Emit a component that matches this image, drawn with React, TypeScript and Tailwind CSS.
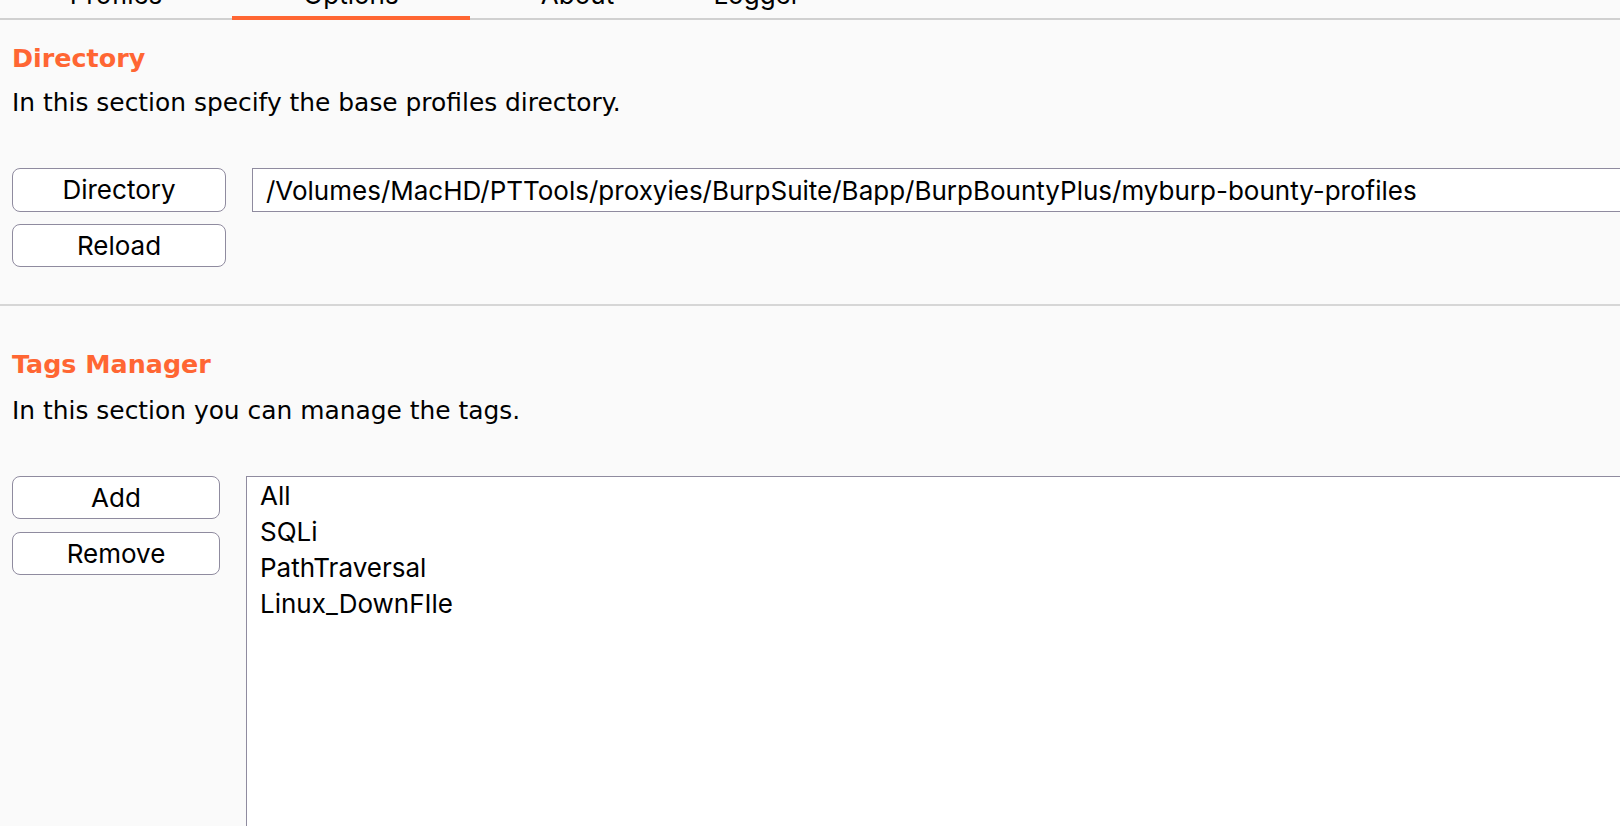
import { useState } from 'react';

type Tab = {
  label: string;
  width: string;
};

const tabs: Tab[] = [
  { label: 'Profiles', width: 'w-[232px]' },
  { label: 'Options', width: 'w-[238px]' },
  { label: 'About', width: 'w-[215px]' },
  { label: 'Logger', width: 'w-[144px]' },
];

const tags = ['All', 'SQLi', 'PathTraversal', 'Linux_DownFIle'];

const uiFont = "font-['Inter','Liberation_Sans',sans-serif]";
const textFont = "font-['DejaVu_Sans','Liberation_Sans',sans-serif]";

function AquaButton({ label, width }: { label: string; width: string }) {
  return (
    <button
      className={`${width} h-[43px] rounded-[8px] border border-[#8f8b9f] bg-white text-[26px] leading-none text-black ${uiFont}`}
    >
      {label}
    </button>
  );
}

function SectionTitle({ title, description, gap }: { title: string; description: string; gap: string }) {
  return (
    <div className={textFont}>
      <h2 className="text-[25.4px] font-bold leading-[30px] text-[#ff6633]">{title}</h2>
      <p className={`${gap} text-[24.9px] leading-[30px] text-black`}>{description}</p>
    </div>
  );
}

export default function App() {
  const [activeTab] = useState('Options');
  const [directory] = useState('/Volumes/MacHD/PTTools/proxyies/BurpSuite/Bapp/BurpBountyPlus/myburp-bounty-profiles');

  return (
    <div className="h-[826px] w-full overflow-hidden bg-[#fafafa]">
      {/* tab strip, scrolled so only the bottom of the labels shows */}
      <div className={`flex h-[20px] border-b-2 border-[#d0d0d0] ${uiFont}`}>
        {tabs.map((tab) => (
          <div
            key={tab.label}
            className={`${tab.width} -mb-[2px] h-[20px] shrink-0 overflow-hidden ${
              activeTab === tab.label ? 'border-b-4 border-[#ff6633]' : ''
            }`}
          >
            <div className="-mt-[18.4px] text-center text-[26px] leading-none text-black">{tab.label}</div>
          </div>
        ))}
      </div>

      {/* Directory */}
      <section className="px-[12px] pt-[23px]">
        <SectionTitle
          title="Directory"
          description="In this section specify the base profiles directory."
          gap="mt-[15px]"
        />
        <div className="mt-[50px] flex gap-[26px]">
          <div className="flex w-[214px] shrink-0 flex-col gap-[12px]">
            <AquaButton label="Directory" width="w-[214px] h-[44px]" />
            <AquaButton label="Reload" width="w-[214px]" />
          </div>
          <div
            className={`flex h-[44px] w-[1420px] shrink-0 items-center border border-r-0 border-[#8f8b9f] bg-white pl-[13px] text-[26px] text-black ${uiFont}`}
          >
            {directory}
          </div>
        </div>
      </section>

      <div className="mt-[37px] h-[2px] w-full bg-[#d6d6d6]" />

      {/* Tags Manager */}
      <section className="px-[12px] pt-[43px]">
        <SectionTitle title="Tags Manager" description="In this section you can manage the tags." gap="mt-[17px]" />
        <div className="mt-[50px] flex gap-[26px]">
          <div className="flex w-[208px] shrink-0 flex-col gap-[13px]">
            <AquaButton label="Add" width="w-[208px]" />
            <AquaButton label="Remove" width="w-[208px]" />
          </div>
          <ul
            className={`h-[400px] w-[1420px] shrink-0 border border-r-0 border-b-0 border-[#8f8b9f] bg-white pl-[13px] pt-[1px] text-[26px] leading-[36px] text-black ${uiFont}`}
          >
            {tags.map((tag) => (
              <li key={tag}>{tag}</li>
            ))}
          </ul>
        </div>
      </section>
    </div>
  );
}
